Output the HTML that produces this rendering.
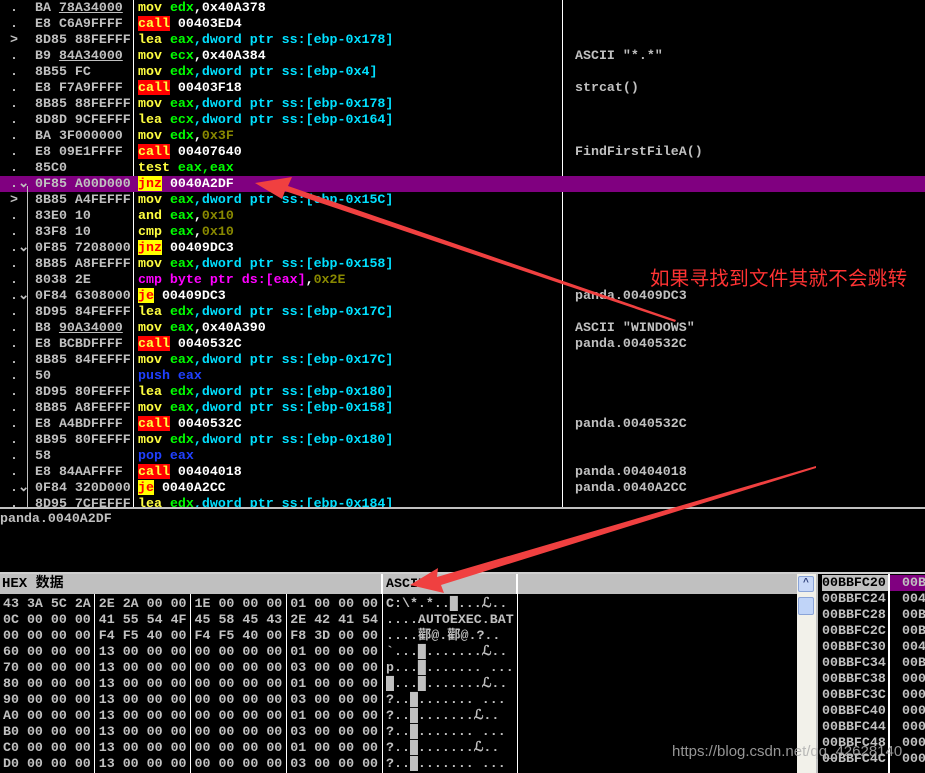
<!DOCTYPE html>
<html><head><meta charset="utf-8"><style>
*{margin:0;padding:0;box-sizing:border-box}
body{width:925px;height:773px;background:#000;position:relative;overflow:hidden;font-family:"Liberation Mono","Noto Sans CJK SC",monospace;font-size:13.3px;font-weight:bold;color:#c0c0c0}
.r{position:absolute;left:0;width:925px;height:16px;line-height:16px;white-space:pre}
.m{position:absolute;left:10px}
.h{position:absolute;left:35px;width:96px;overflow:hidden}
.i{position:absolute;left:138px}
.c{position:absolute;left:575px}
.y{color:#ffff40}.g{color:#00ff00}.cy{color:#00e0ff}.o{color:#888800}.w{color:#fff}.b{color:#2040ff}.mg{color:#ff00ff}
.call{background:#ff0000;color:#ffff40}
.jz{background:#ffff00;color:#ff0000}
.u{text-decoration:underline}
.vl{position:absolute;background:#fff;width:1px}
.d{position:absolute;height:16px;line-height:16px;white-space:pre;left:3px}
</style></head><body>

<div class="vl" style="left:133px;top:0;height:508px"></div>
<div class="vl" style="left:562px;top:0;height:508px"></div>
<div class="r" style="top:176px;background:#800080"></div>
<div style="position:absolute;left:27px;top:186px;width:1px;height:322px;background:#c0c0c0"></div>

<div class="r" style="top:0"><span class="m">.</span><span class="h">BA <span class="u">78A34000</span></span><span class="i"><span class="y">mov</span> <span class="g">edx</span><span class="w">,0x40A378</span></span></div>
<div class="r" style="top:16px"><span class="m">.</span><span class="h">E8 C6A9FFFF</span><span class="i"><span class="call">call</span> <span class="w">00403ED4</span></span></div>
<div class="r" style="top:32px"><span class="m">&gt;</span><span class="h">8D85 88FEFFFF</span><span class="i"><span class="y">lea</span> <span class="g">eax</span><span class="cy">,dword ptr ss:[ebp-0x178]</span></span></div>
<div class="r" style="top:48px"><span class="m">.</span><span class="h">B9 <span class="u">84A34000</span></span><span class="i"><span class="y">mov</span> <span class="g">ecx</span><span class="w">,0x40A384</span></span><span class="c">ASCII "*.*"</span></div>
<div class="r" style="top:64px"><span class="m">.</span><span class="h">8B55 FC</span><span class="i"><span class="y">mov</span> <span class="g">edx</span><span class="cy">,dword ptr ss:[ebp-0x4]</span></span></div>
<div class="r" style="top:80px"><span class="m">.</span><span class="h">E8 F7A9FFFF</span><span class="i"><span class="call">call</span> <span class="w">00403F18</span></span><span class="c">strcat()</span></div>
<div class="r" style="top:96px"><span class="m">.</span><span class="h">8B85 88FEFFFF</span><span class="i"><span class="y">mov</span> <span class="g">eax</span><span class="cy">,dword ptr ss:[ebp-0x178]</span></span></div>
<div class="r" style="top:112px"><span class="m">.</span><span class="h">8D8D 9CFEFFFF</span><span class="i"><span class="y">lea</span> <span class="g">ecx</span><span class="cy">,dword ptr ss:[ebp-0x164]</span></span></div>
<div class="r" style="top:128px"><span class="m">.</span><span class="h">BA 3F000000</span><span class="i"><span class="y">mov</span> <span class="g">edx</span><span class="w">,</span><span class="o">0x3F</span></span></div>
<div class="r" style="top:144px"><span class="m">.</span><span class="h">E8 09E1FFFF</span><span class="i"><span class="call">call</span> <span class="w">00407640</span></span><span class="c">FindFirstFileA()</span></div>
<div class="r" style="top:160px"><span class="m">.</span><span class="h">85C0</span><span class="i"><span class="y">test</span> <span class="g">eax,eax</span></span></div>
<div class="r" style="top:176px"><span class="m">.⌄</span><span class="h">0F85 A00D0000</span><span class="i"><span class="jz">jnz</span> <span class="w">0040A2DF</span></span></div>
<div class="r" style="top:192px"><span class="m">&gt;</span><span class="h">8B85 A4FEFFFF</span><span class="i"><span class="y">mov</span> <span class="g">eax</span><span class="cy">,dword ptr ss:[ebp-0x15C]</span></span></div>
<div class="r" style="top:208px"><span class="m">.</span><span class="h">83E0 10</span><span class="i"><span class="y">and</span> <span class="g">eax</span><span class="w">,</span><span class="o">0x10</span></span></div>
<div class="r" style="top:224px"><span class="m">.</span><span class="h">83F8 10</span><span class="i"><span class="y">cmp</span> <span class="g">eax</span><span class="w">,</span><span class="o">0x10</span></span></div>
<div class="r" style="top:240px"><span class="m">.⌄</span><span class="h">0F85 72080000</span><span class="i"><span class="jz">jnz</span> <span class="w">00409DC3</span></span></div>
<div class="r" style="top:256px"><span class="m">.</span><span class="h">8B85 A8FEFFFF</span><span class="i"><span class="y">mov</span> <span class="g">eax</span><span class="cy">,dword ptr ss:[ebp-0x158]</span></span></div>
<div class="r" style="top:272px"><span class="m">.</span><span class="h">8038 2E</span><span class="i"><span class="mg">cmp byte ptr ds:[eax]</span><span class="w">,</span><span class="o">0x2E</span></span></div>
<div class="r" style="top:288px"><span class="m">.⌄</span><span class="h">0F84 63080000</span><span class="i"><span class="jz">je</span> <span class="w">00409DC3</span></span><span class="c">panda.00409DC3</span></div>
<div class="r" style="top:304px"><span class="m">.</span><span class="h">8D95 84FEFFFF</span><span class="i"><span class="y">lea</span> <span class="g">edx</span><span class="cy">,dword ptr ss:[ebp-0x17C]</span></span></div>
<div class="r" style="top:320px"><span class="m">.</span><span class="h">B8 <span class="u">90A34000</span></span><span class="i"><span class="y">mov</span> <span class="g">eax</span><span class="w">,0x40A390</span></span><span class="c">ASCII "WINDOWS"</span></div>
<div class="r" style="top:336px"><span class="m">.</span><span class="h">E8 BCBDFFFF</span><span class="i"><span class="call">call</span> <span class="w">0040532C</span></span><span class="c">panda.0040532C</span></div>
<div class="r" style="top:352px"><span class="m">.</span><span class="h">8B85 84FEFFFF</span><span class="i"><span class="y">mov</span> <span class="g">eax</span><span class="cy">,dword ptr ss:[ebp-0x17C]</span></span></div>
<div class="r" style="top:368px"><span class="m">.</span><span class="h">50</span><span class="i"><span class="b">push eax</span></span></div>
<div class="r" style="top:384px"><span class="m">.</span><span class="h">8D95 80FEFFFF</span><span class="i"><span class="y">lea</span> <span class="g">edx</span><span class="cy">,dword ptr ss:[ebp-0x180]</span></span></div>
<div class="r" style="top:400px"><span class="m">.</span><span class="h">8B85 A8FEFFFF</span><span class="i"><span class="y">mov</span> <span class="g">eax</span><span class="cy">,dword ptr ss:[ebp-0x158]</span></span></div>
<div class="r" style="top:416px"><span class="m">.</span><span class="h">E8 A4BDFFFF</span><span class="i"><span class="call">call</span> <span class="w">0040532C</span></span><span class="c">panda.0040532C</span></div>
<div class="r" style="top:432px"><span class="m">.</span><span class="h">8B95 80FEFFFF</span><span class="i"><span class="y">mov</span> <span class="g">edx</span><span class="cy">,dword ptr ss:[ebp-0x180]</span></span></div>
<div class="r" style="top:448px"><span class="m">.</span><span class="h">58</span><span class="i"><span class="b">pop eax</span></span></div>
<div class="r" style="top:464px"><span class="m">.</span><span class="h">E8 84AAFFFF</span><span class="i"><span class="call">call</span> <span class="w">00404018</span></span><span class="c">panda.00404018</span></div>
<div class="r" style="top:480px"><span class="m">.⌄</span><span class="h">0F84 320D0000</span><span class="i"><span class="jz">je</span> <span class="w">0040A2CC</span></span><span class="c">panda.0040A2CC</span></div>
<div class="r" style="top:496px;height:12px;overflow:hidden"><span class="m">.</span><span class="h">8D95 7CFEFFFF</span><span class="i"><span class="y">lea</span> <span class="g">edx</span><span class="cy">,dword ptr ss:[ebp-0x184]</span></span></div>

<div style="position:absolute;left:0;top:507px;width:925px;height:2px;background:#c0c0c0"></div>
<div style="position:absolute;left:0;top:511px;line-height:16px">panda.0040A2DF</div>

<div style="position:absolute;left:0;top:572px;width:925px;height:2px;background:#d0d0d0"></div>
<div style="position:absolute;left:0;top:574px;width:797px;height:20px;background:#c0c0c0"></div>
<div style="position:absolute;left:2px;top:574px;line-height:20px;color:#000;font-size:14px">HEX 数据</div>
<div style="position:absolute;left:381px;top:574px;width:2px;height:20px;background:#fff"></div>
<div style="position:absolute;left:386px;top:574px;line-height:20px;color:#000">ASCII</div>
<div style="position:absolute;left:516px;top:574px;width:2px;height:20px;background:#fff"></div>
<div style="position:absolute;left:517px;top:594px;width:280px;height:179px;background:#000"></div>
<div class="vl" style="left:94px;top:594px;height:179px"></div>
<div class="vl" style="left:190px;top:594px;height:179px"></div>
<div class="vl" style="left:286px;top:594px;height:179px"></div>
<div class="vl" style="left:382px;top:594px;height:179px"></div>
<div class="vl" style="left:517px;top:594px;height:179px"></div>

<div class="d" style="top:596px">43 3A 5C 2A 2E 2A 00 00 1E 00 00 00 01 00 00 00 C:\*.*..█...ℒ..</div>
<div class="d" style="top:612px">0C 00 00 00 41 55 54 4F 45 58 45 43 2E 42 41 54 ....AUTOEXEC.BAT</div>
<div class="d" style="top:628px">00 00 00 00 F4 F5 40 00 F4 F5 40 00 F8 3D 00 00 ....酄@.酄@.?..</div>
<div class="d" style="top:644px">60 00 00 00 13 00 00 00 00 00 00 00 01 00 00 00 `...█.......ℒ..</div>
<div class="d" style="top:660px">70 00 00 00 13 00 00 00 00 00 00 00 03 00 00 00 p...█....... ...</div>
<div class="d" style="top:676px">80 00 00 00 13 00 00 00 00 00 00 00 01 00 00 00 █...█.......ℒ..</div>
<div class="d" style="top:692px">90 00 00 00 13 00 00 00 00 00 00 00 03 00 00 00 ?..█....... ...</div>
<div class="d" style="top:708px">A0 00 00 00 13 00 00 00 00 00 00 00 01 00 00 00 ?..█.......ℒ..</div>
<div class="d" style="top:724px">B0 00 00 00 13 00 00 00 00 00 00 00 03 00 00 00 ?..█....... ...</div>
<div class="d" style="top:740px">C0 00 00 00 13 00 00 00 00 00 00 00 01 00 00 00 ?..█.......ℒ..</div>
<div class="d" style="top:756px">D0 00 00 00 13 00 00 00 00 00 00 00 03 00 00 00 ?..█....... ...</div>

<div style="position:absolute;left:797px;top:574px;width:19px;height:199px;background:#f2f1ea"></div>
<div style="position:absolute;left:798px;top:576px;width:16px;height:16px;background:#c8d8f8;border:1px solid #8aa4d8;border-radius:2px;color:#30407a;font-size:10px;line-height:14px;text-align:center">^</div>
<div style="position:absolute;left:798px;top:597px;width:16px;height:18px;background:#c0d4f8;border:1px solid #8aa4d8;border-radius:2px"></div>
<div style="position:absolute;left:816px;top:574px;width:2px;height:199px;background:#c0c0c0"></div>
<div style="position:absolute;left:888px;top:574px;width:2px;height:199px;background:#fff"></div>
<div style="position:absolute;left:890px;top:575px;width:35px;height:16px;background:#800080"></div>
<div style="position:absolute;left:822px;top:575px;line-height:16px;white-space:pre;color:#000;background:#c0c0c0;width:66px">00BBFC20</div>
<div style="position:absolute;left:822px;top:591px;line-height:16px;white-space:pre">00BBFC24
00BBFC28
00BBFC2C
00BBFC30
00BBFC34
00BBFC38
00BBFC3C
00BBFC40
00BBFC44
00BBFC48
00BBFC4C</div>
<div style="position:absolute;left:902px;top:575px;line-height:16px;white-space:pre">00B
004
00B
00B
004
00B
000
000
000
000
000
000</div>

<div style="position:absolute;left:650px;top:262px;color:#ff3333;font-family:'Noto Sans CJK SC',sans-serif;font-weight:normal;font-size:19.5px;letter-spacing:0.3px">如果寻找到文件其就不会跳转</div>

<svg style="position:absolute;left:0;top:0" width="925" height="773">
<polygon points="255,183 292,177 288,186 676,320 675,322 285,191 282,199" fill="#f04040"/>
<polygon points="410,585 438,568 437,577 816,466 816,468 441,585 444,593" fill="#f04040"/>
</svg>
<div style="position:absolute;left:672px;top:743px;color:#b0b0b0;font-family:'Liberation Sans',sans-serif;font-weight:normal;font-size:15px;opacity:.85">https://blog.csdn.net/qq_42628140</div>
</body></html>
